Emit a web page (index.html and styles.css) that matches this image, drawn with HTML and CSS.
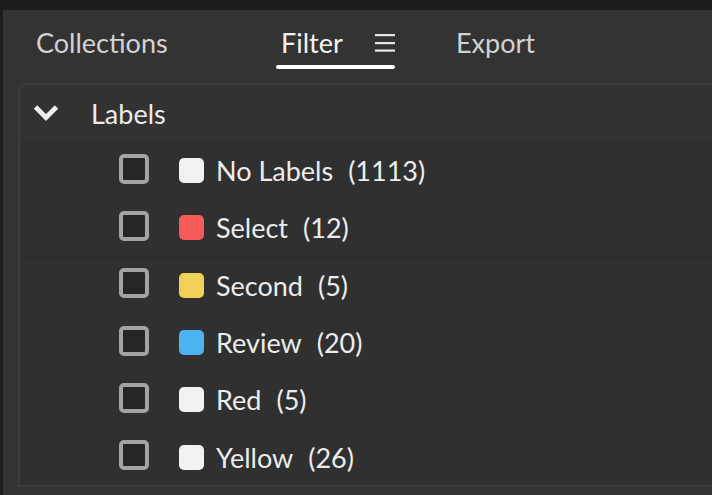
FILE: index.html
```html
<!DOCTYPE html>
<html lang="en">
<head>
<meta charset="utf-8">
<title>Filter</title>
<link rel="stylesheet" href="styles.css">
</head>
<body>
<div class="panel">
  <nav class="tabs">
    <div class="tab tab-collections">Collections</div>
    <div class="tab tab-filter">
      <div class="tab-row">
        <span class="tab-label">Filter</span>
        <svg class="menu-icon" width="20" height="20" viewBox="0 0 20 20" aria-hidden="true">
          <rect x="0" y="1" width="20" height="2.2" fill="#e6e6e6"/>
          <rect x="0" y="9" width="20" height="2.2" fill="#e6e6e6"/>
          <rect x="0" y="16.5" width="20" height="2.2" fill="#e6e6e6"/>
        </svg>
      </div>
      <div class="tab-underline"></div>
    </div>
    <div class="tab tab-export">Export</div>
  </nav>

  <section class="card">
    <div class="card-header">
      <svg class="chevron" width="26" height="18" viewBox="0 0 26 18" aria-hidden="true">
        <polyline points="2.5,3 13,13.5 23.5,3" fill="none" stroke="#efefef" stroke-width="4.8" stroke-linejoin="miter"/>
      </svg>
      <span class="header-title">Labels</span>
    </div>
    <ul class="rows">
      <li class="row"><span class="check"></span><span class="swatch sw-white"></span><span class="name">No Labels</span><span class="count">(1113)</span></li>
      <li class="row"><span class="check"></span><span class="swatch sw-red"></span><span class="name">Select</span><span class="count">(12)</span></li>
      <li class="row"><span class="check"></span><span class="swatch sw-yellow"></span><span class="name">Second</span><span class="count">(5)</span></li>
      <li class="row"><span class="check"></span><span class="swatch sw-blue"></span><span class="name">Review</span><span class="count">(20)</span></li>
      <li class="row"><span class="check"></span><span class="swatch sw-white"></span><span class="name">Red</span><span class="count">(5)</span></li>
      <li class="row"><span class="check"></span><span class="swatch sw-white"></span><span class="name">Yellow</span><span class="count">(26)</span></li>
    </ul>
  </section>
</div>
</body>
</html>
```

FILE: styles.css
```css
* { box-sizing: border-box; }

html, body {
  margin: 0;
  padding: 0;
  height: 100%;
  overflow: hidden;
}

body {
  background: #1d1d1d;
  font-family: "Lato", "Liberation Sans", sans-serif;
  color: #e8e8e8;
}

.panel {
  margin: 10px 0 0 3px;
  height: calc(100% - 10px);
  background: #333333;
  padding-top: 16px;
}

.tabs {
  display: flex;
  align-items: flex-start;
  padding-left: 33px;
  height: 57px;
}

.tab {
  font-size: 27px;
  line-height: 34px;
  color: #d2d2d2;
  white-space: nowrap;
}

.tab-collections {
  width: 240px;
}

.tab-filter {
  width: 119px;
  display: flex;
  flex-direction: column;
  color: #f2f2f2;
}

.tab-row {
  display: flex;
  align-items: center;
  justify-content: space-between;
  padding-left: 5px;
}

.menu-icon {
  display: block;
  margin-top: -1px;
}

.tab-underline {
  margin-top: 5px;
  height: 4px;
  border-radius: 2px;
  background: #ffffff;
}

.tab-export {
  margin-left: 61px;
}

.card {
  margin-left: 15px;
  margin-right: -10px;
  border: 2px solid #3d3d3d;
  border-right: none;
  border-top-left-radius: 9px;
  background: #303030;
  overflow: hidden;
}

.card-header {
  height: 56px;
  display: flex;
  align-items: center;
  padding-left: 13px;
  background: #323232;
}

.chevron {
  display: block;
  margin-top: 0;
}

.header-title {
  margin-left: 32px;
  font-size: 27px;
  line-height: 34px;
  color: #ececec;
  padding-top: 1px;
}

.rows {
  list-style: none;
  margin: 0;
  padding: 0;
}

.row {
  height: 57.3px;
  display: flex;
  align-items: center;
  padding-left: 99px;
  padding-top: 2px;
  border-top: 1px solid #2b2b2b;
  background: #303030;
}

.row:first-child {
  border-top-color: #2e2e2e;
}

.check {
  width: 30px;
  height: 30px;
  border: 4px solid #a3a3a3;
  border-radius: 5px;
  background: #262626;
  margin-top: -5px;
}

.swatch {
  width: 25px;
  height: 25px;
  border-radius: 5px;
  margin-left: 30px;
  margin-top: -1px;
}

.sw-white { background: #f2f2f2; }
.sw-red { background: #f55a5a; }
.sw-yellow { background: #f1d058; }
.sw-blue { background: #4cb2f2; }

.name, .count {
  font-size: 27px;
  line-height: 34px;
  color: #ececec;
}

.name {
  margin-left: 12px;
}

.count {
  margin-left: 15px;
}
```
